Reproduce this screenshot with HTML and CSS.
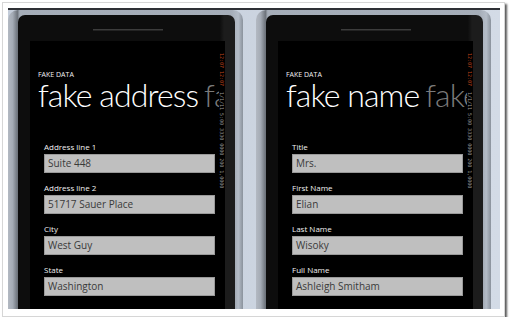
FILE: index.html
```html
<!DOCTYPE html>
<html>
<head>
<meta charset="utf-8">
<link rel="stylesheet" href="styles.css">
</head>
<body>
<div class="frame">
  <div class="stage">
    <div class="phone">
      <div class="body">
        <div class="speaker"></div>
        <div class="screen">
          <div class="main">
            <div class="app">FAKE DATA</div>
            <div class="title"><span class="cur">fake address</span><span class="next">fake name</span></div>
            <div class="fields">
              <div class="field"><div class="label">Address line 1</div><div class="box">Suite 448</div></div>
              <div class="field"><div class="label">Address line 2</div><div class="box">51717 Sauer Place</div></div>
              <div class="field"><div class="label">City</div><div class="box">West Guy</div></div>
              <div class="field"><div class="label">State</div><div class="box">Washington</div></div>
              <div class="field"><div class="label">Zip Code</div><div class="box">98101</div></div>
            </div>
          </div>
          <div class="strip"><span class="hot">12:07 12:07</span><span class="cold">1/1/11 5:00 3330 0000 200 1,0000</span></div>
        </div>
      </div>
    </div>
    <div class="phone">
      <div class="body">
        <div class="speaker"></div>
        <div class="screen">
          <div class="main">
            <div class="app">FAKE DATA</div>
            <div class="title"><span class="cur">fake name</span><span class="next">fake address</span></div>
            <div class="fields">
              <div class="field"><div class="label">Title</div><div class="box">Mrs.</div></div>
              <div class="field"><div class="label">First Name</div><div class="box">Elian</div></div>
              <div class="field"><div class="label">Last Name</div><div class="box">Wisoky</div></div>
              <div class="field"><div class="label">Full Name</div><div class="box">Ashleigh Smitham</div></div>
            </div>
          </div>
          <div class="strip"><span class="hot">12:07 12:07</span><span class="cold">1/1/11 5:00 3330 0000 200 1,0000</span></div>
        </div>
      </div>
    </div>
  </div>
</div>
</body>
</html>
```

FILE: styles.css
```css
html, body {
  margin: 0;
  padding: 0;
  background: #ffffff;
}

.frame {
  margin: 2px 0 0 2px;
  width: 492px;
  padding: 5px 4px 7px 5px;
  border: 1px solid #d6d6d6;
  background: #ffffff;
  box-shadow: 2px 2px 2px rgba(0, 0, 0, 0.65);
}

.stage {
  height: 299px;
  border-top: 2px solid #2e3035;
  background: linear-gradient(to right, #c4cdda, #d3dbe6);
  display: flex;
  gap: 13px;
  overflow: hidden;
}

.phone {
  flex: none;
  width: 235px;
  height: 340px;
  box-sizing: border-box;
  padding: 5px 8px 0 10px;
  border-radius: 10px 10px 0 0;
  background:
    linear-gradient(to right, #b3b9c2 0%, #a4abb5 2%, #6d737b 4%, rgba(143, 151, 162, 0) 5%, rgba(143, 151, 162, 0) 95%, #b4bcc7 98%, #8a929c 100%),
    linear-gradient(to bottom, #a6aeb9 0%, #959da8 50%, #8a9099 100%);
}

.body {
  height: 335px;
  border-radius: 7px 7px 0 0;
  background: linear-gradient(to right, #0d0d0d 0%, #0d0d0d 93%, #1c1c1c 95%, #1c1c1c 100%);
  padding: 0 10px 0 12px;
  overflow: hidden;
}

.speaker {
  width: 70px;
  height: 2px;
  margin: 14px auto 10px;
  background: #3c3c3c;
  border-bottom: 1px solid #232323;
  box-sizing: border-box;
}

.screen {
  display: flex;
  background: #000000;
  height: 300px;
}

.main {
  width: 189px;
  flex: none;
  overflow: hidden;
  padding-left: 8px;
  box-sizing: border-box;
  font-family: "Open Sans", "Liberation Sans", sans-serif;
}

.app {
  margin-top: 30px;
  font-size: 7px;
  line-height: 8px;
  color: #f2f2f2;
}

.title {
  margin-top: 0;
  font-family: "Lato", "Open Sans", sans-serif;
  font-size: 32px;
  line-height: 32px;
  font-weight: 300;
  white-space: nowrap;
  color: #ffffff;
  letter-spacing: -0.9px;
}

.next {
  margin-left: 6px;
  color: #7a7a7a;
}

.fields {
  margin: 31px 0 0 6px;
}

.field {
  margin-bottom: 10px;
}

.label {
  font-size: 8px;
  line-height: 10px;
  color: #f0f0f0;
  margin-bottom: 2px;
}

.box {
  width: 171px;
  height: 19px;
  box-sizing: border-box;
  background: #bfbfbf;
  border: 1px solid #9a9a9a;
  padding-left: 3px;
  font-size: 10px;
  line-height: 17px;
  color: #3a3a3a;
}

.strip {
  width: 6px;
  flex: none;
  padding-top: 12px;
  writing-mode: vertical-rl;
  font-family: "DejaVu Sans Mono", monospace;
  font-size: 5px;
  line-height: 6px;
  white-space: nowrap;
}

.hot {
  color: #c2461c;
}

.cold {
  margin-top: 6px;
  color: #9a9a9a;
}
```
